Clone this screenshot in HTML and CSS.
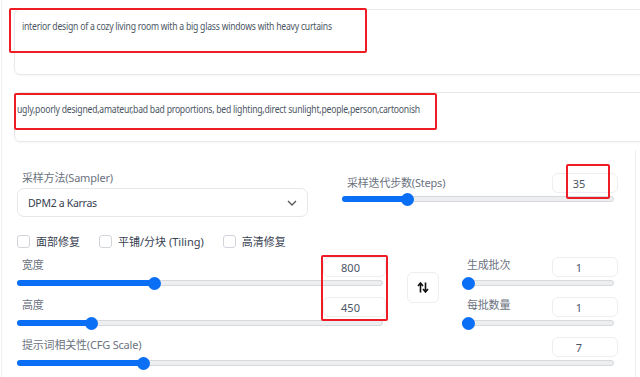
FILE: index.html
```html
<!DOCTYPE html>
<html lang="zh">
<head>
  <meta charset="UTF-8">
  <title>txt2img</title>
  <link rel="stylesheet" href="styles.css">
</head>
<body>
<div class="page">
  <div class="prompts">
    <div class="prompt tall"><span class="ptext">interior design of a cozy living room with a big glass windows with heavy curtains</span></div>
    <div class="prompt neg"><span class="ptext">ugly,poorly designed,amateur,bad bad proportions, bed lighting,direct sunlight,people,person,cartoonish</span></div>
  </div>

  <div class="panel">
    <div class="top-row">
      <div class="sampler">
        <div class="label">采样方法(Sampler)</div>
        <div class="select">
          <span>DPM2 a Karras</span>
          <svg width="10" height="6" viewBox="0 0 10 6"><path d="M1 1l4 4 4-4" fill="none" stroke="#555" stroke-width="1.3"/></svg>
        </div>
      </div>
      <div class="slider steps">
        <div class="head"><span class="label">采样迭代步数(Steps)</span><span class="num">35</span></div>
        <div class="range" style="--p:.227"><span class="fill"></span><span class="thumb"></span></div>
      </div>
    </div>

    <div class="checks">
      <label class="check"><span class="box"></span>面部修复</label>
      <label class="check"><span class="box"></span>平铺/分块 (Tiling)</label>
      <label class="check"><span class="box"></span>高清修复</label>
    </div>

    <div class="dims">
      <div class="size-col">
        <div class="slider">
          <div class="head"><span class="label">宽度</span><span class="num">800</span></div>
          <div class="range" style="--p:.371"><span class="fill"></span><span class="thumb"></span></div>
        </div>
        <div class="slider">
          <div class="head"><span class="label">高度</span><span class="num">450</span></div>
          <div class="range" style="--p:.193"><span class="fill"></span><span class="thumb"></span></div>
        </div>
      </div>
      <div class="swap-wrap">
        <button class="swap" type="button">
          <svg width="12" height="11" viewBox="0 0 12 11"><path d="M3.5 10.5V1.5M1 4l2.5-3L6 4" fill="none" stroke="#111" stroke-width="1.6"/><path d="M8.5 0.5v9M6 7l2.5 3L11 7" fill="none" stroke="#111" stroke-width="1.6"/></svg>
        </button>
      </div>
      <div class="batch-col">
        <div class="slider">
          <div class="head"><span class="label">生成批次</span><span class="num">1</span></div>
          <div class="range" style="--p:0"><span class="fill"></span><span class="thumb"></span></div>
        </div>
        <div class="slider">
          <div class="head"><span class="label">每批数量</span><span class="num">1</span></div>
          <div class="range" style="--p:0"><span class="fill"></span><span class="thumb"></span></div>
        </div>
      </div>
    </div>

    <div class="slider cfg">
      <div class="head"><span class="label">提示词相关性(CFG Scale)</span><span class="num">7</span></div>
      <div class="range" style="--p:.205"><span class="fill"></span><span class="thumb"></span></div>
    </div>
  </div>

  <!-- red annotation boxes -->
  <div class="mark m1"></div>
  <div class="mark m2"></div>
  <div class="mark m3"></div>
  <div class="mark m4"></div>
</div>
</body>
</html>
```

FILE: styles.css
```css
body {
  margin: 0;
  background: #fff;
  font-family: "Noto Sans", "Noto Sans CJK SC", sans-serif;
  color: #4b5563;
  overflow: hidden;
}

.page {
  position: relative;
  width: 640px;
  height: 377px;
  border-left: 1px solid #eef0f3;
  margin-left: 1px;
  box-sizing: border-box;
  overflow: hidden;
}

.prompts {
  padding: 9px 0 0 12px;
  display: flex;
  flex-direction: column;
  gap: 17px;
}

.prompt {
  width: 660px;
  height: 50px;
  box-sizing: border-box;
  border: 1px solid #e7e9ec;
  border-radius: 6px;
  box-shadow: 0 1px 2px rgba(0,0,0,0.04);
  padding: 8px 0 0 7px;
  font-size: 11.5px;
  line-height: 16px;
  color: #4b5563;
  white-space: nowrap;
}

.prompt.neg {
  padding-left: 2px;
}

.ptext {
  display: inline-block;
  letter-spacing: -0.3px;
  transform: scaleX(0.75);
  transform-origin: left center;
}

.prompt.tall {
  height: 66px;
}

.panel {
  margin-top: 8px;
  width: 634px;
  height: 227px;
  box-sizing: border-box;
  border-right: 1px solid #eceef1;
  padding: 19px 21px 0 15px;
}

.label {
  font-size: 11px;
  color: #6b7280;
  letter-spacing: -0.2px;
  padding-left: 5px;
}

.top-row {
  display: flex;
  justify-content: space-between;
}

.sampler {
  width: 291px;
}

.sampler .label {
  display: block;
  line-height: 18px;
}

.select {
  margin-top: 1px;
  height: 29px;
  box-sizing: border-box;
  border: 1px solid #e5e7eb;
  border-radius: 7px;
  display: flex;
  align-items: center;
  justify-content: space-between;
  padding: 0 10px 0 10px;
  font-size: 10.5px;
  letter-spacing: -0.3px;
  color: #374151;
}

.slider {
  display: flex;
  flex-direction: column;
}

.head {
  height: 20px;
  display: flex;
  align-items: center;
  justify-content: space-between;
}

.head .label {
  align-self: flex-start;
  line-height: 16px;
}

.num {
  width: 66px;
  height: 20px;
  box-sizing: border-box;
  border: 1px solid #eceef1;
  border-radius: 6px;
  font-size: 11px;
  color: #4b5563;
  display: flex;
  align-items: center;
  justify-content: center;
  padding-right: 12px;
  margin-right: -4px;
}

.steps {
  width: 272px;
  margin-top: 4px;
}

.steps .label {
  margin-top: 2px;
}

.range {
  height: 12px;
  display: flex;
  align-items: center;
  position: relative;
}

.range::before {
  content: "";
  position: absolute;
  left: 0;
  right: 0;
  top: 3px;
  height: 6px;
  box-sizing: border-box;
  background: #eceef0;
  border: 1px solid #d6d9dd;
  border-radius: 3px;
}

.fill {
  position: relative;
  height: 6px;
  border-radius: 3px 0 0 3px;
  background: #0b6ff5;
  width: calc((100% - 12px) * var(--p) + 6px);
}

.thumb {
  position: relative;
  width: 13px;
  height: 13px;
  border-radius: 50%;
  background: #0b6ff5;
  margin-left: -6px;
  flex: none;
}

.checks {
  display: flex;
  margin-top: 17px;
  height: 14px;
  align-items: center;
}

.check {
  display: flex;
  align-items: center;
  font-size: 11px;
  color: #374151;
  margin-right: 19px;
}

.box {
  width: 11px;
  height: 11px;
  border: 1px solid #d1d5db;
  border-radius: 3px;
  margin-right: 6px;
}

.dims {
  display: flex;
  margin-top: 9px;
}

.size-col {
  flex: none;
  width: 369px;
  display: flex;
  flex-direction: column;
  gap: 8px;
}

.size-col .num {
  width: 63px;
  margin-right: 0;
  padding-right: 8px;
}

.size-col .range {
  margin-right: 3px;
}

.swap-wrap {
  flex: none;
  width: 76px;
  box-sizing: border-box;
  padding: 15px 0 0 21px;
}

.swap {
  width: 32px;
  height: 31px;
  border: 1px solid #eceef1;
  border-radius: 6px;
  background: #fff;
  display: flex;
  align-items: center;
  justify-content: center;
  padding: 0;
}

.batch-col {
  flex: none;
  width: 152px;
  display: flex;
  flex-direction: column;
  gap: 8px;
}

.cfg {
  margin-top: 8px;
}

.mark {
  position: absolute;
  border: 2px solid #ee1c24;
  border-radius: 2px;
  box-sizing: border-box;
}

.m1 { left: 7px; top: 8px; width: 358px; height: 45px; }
.m2 { left: 12px; top: 93px; width: 423px; height: 37px; }
.m3 { left: 564px; top: 164px; width: 44px; height: 35px; }
.m4 { left: 319px; top: 255px; width: 67px; height: 66px; }
```
